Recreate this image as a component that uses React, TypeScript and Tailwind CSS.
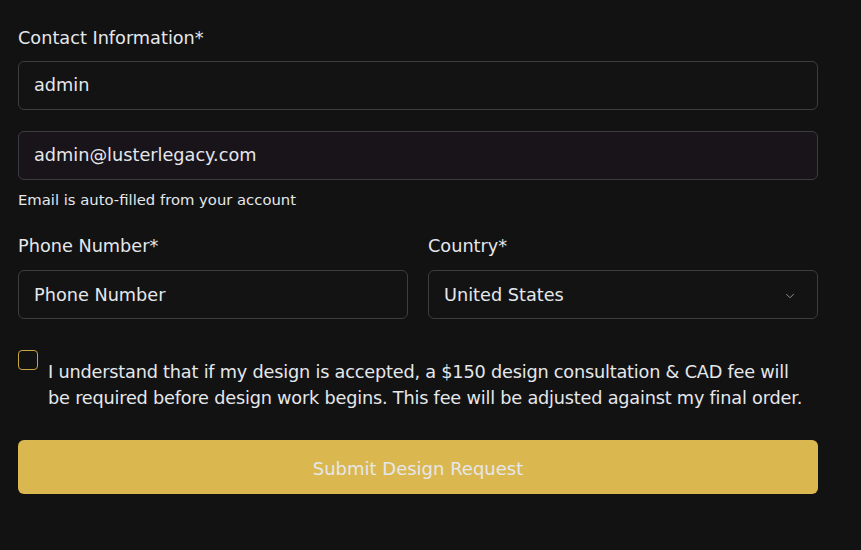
import { ChevronDown } from "lucide-react";

export default function App() {
  return (
    <div
      className="min-h-[550px] w-full bg-[#121212] text-[#e5e7eb] px-[18px] pt-[26px]"
      style={{ fontFamily: '"DejaVu Sans", "Open Sans", sans-serif' }}
    >
      <div className="w-[800px]">
        <label className="block text-[17.7px] font-medium leading-6 mb-[11px]">Contact Information*</label>
        <div className="h-[49px] rounded-md border border-[#3d3d40] bg-[#131313] px-[15px] flex items-center text-[17.7px]">
          admin
        </div>
        <div className="mt-[21px] h-[49px] rounded-md border border-[#3d3b40] bg-[#18141a] px-[15px] flex items-center text-[17.7px]">
          admin@lusterlegacy.com
        </div>
        <p className="mt-[10px] text-[14.8px] leading-5">Email is auto-filled from your account</p>

        <div className="mt-[24px] grid grid-cols-2 gap-5">
          <div>
            <label className="block text-[17.7px] font-medium leading-6 mb-[12px]">Phone Number*</label>
            <div className="h-[49px] rounded-md border border-[#3d3d40] bg-[#131313] px-[15px] pt-[2px] flex items-center text-[17.7px]">
              Phone Number
            </div>
          </div>
          <div>
            <label className="block text-[17.7px] font-medium leading-6 mb-[12px]">Country*</label>
            <div className="h-[49px] rounded-md border border-[#3d3d40] bg-[#131313] pl-[15px] pr-[20px] pt-[2px] flex items-center justify-between text-[17.7px]">
              <span>United States</span>
              <ChevronDown className="w-[14px] h-[14px] text-[#9ca3af]" strokeWidth={1.5} />
            </div>
          </div>
        </div>

        <div className="mt-[30px] flex gap-[10px]">
          <div className="mt-[1px] w-5 h-5 shrink-0 rounded-[4px] border border-[#c9a640]" />
          <p className="pt-[10px] text-[17.7px] leading-[26px] tracking-[-0.2px] whitespace-nowrap">
            I understand that if my design is accepted, a $150 design consultation &amp; CAD fee will
            <br />
            be required before design work begins. This fee will be adjusted against my final order.
          </p>
        </div>

        <button className="mt-[29px] w-full h-[54px] rounded-md bg-[#dbb84f] text-[#e5e7eb] text-[18px] font-medium pt-[2px]">
          Submit Design Request
        </button>
      </div>
    </div>
  );
}
